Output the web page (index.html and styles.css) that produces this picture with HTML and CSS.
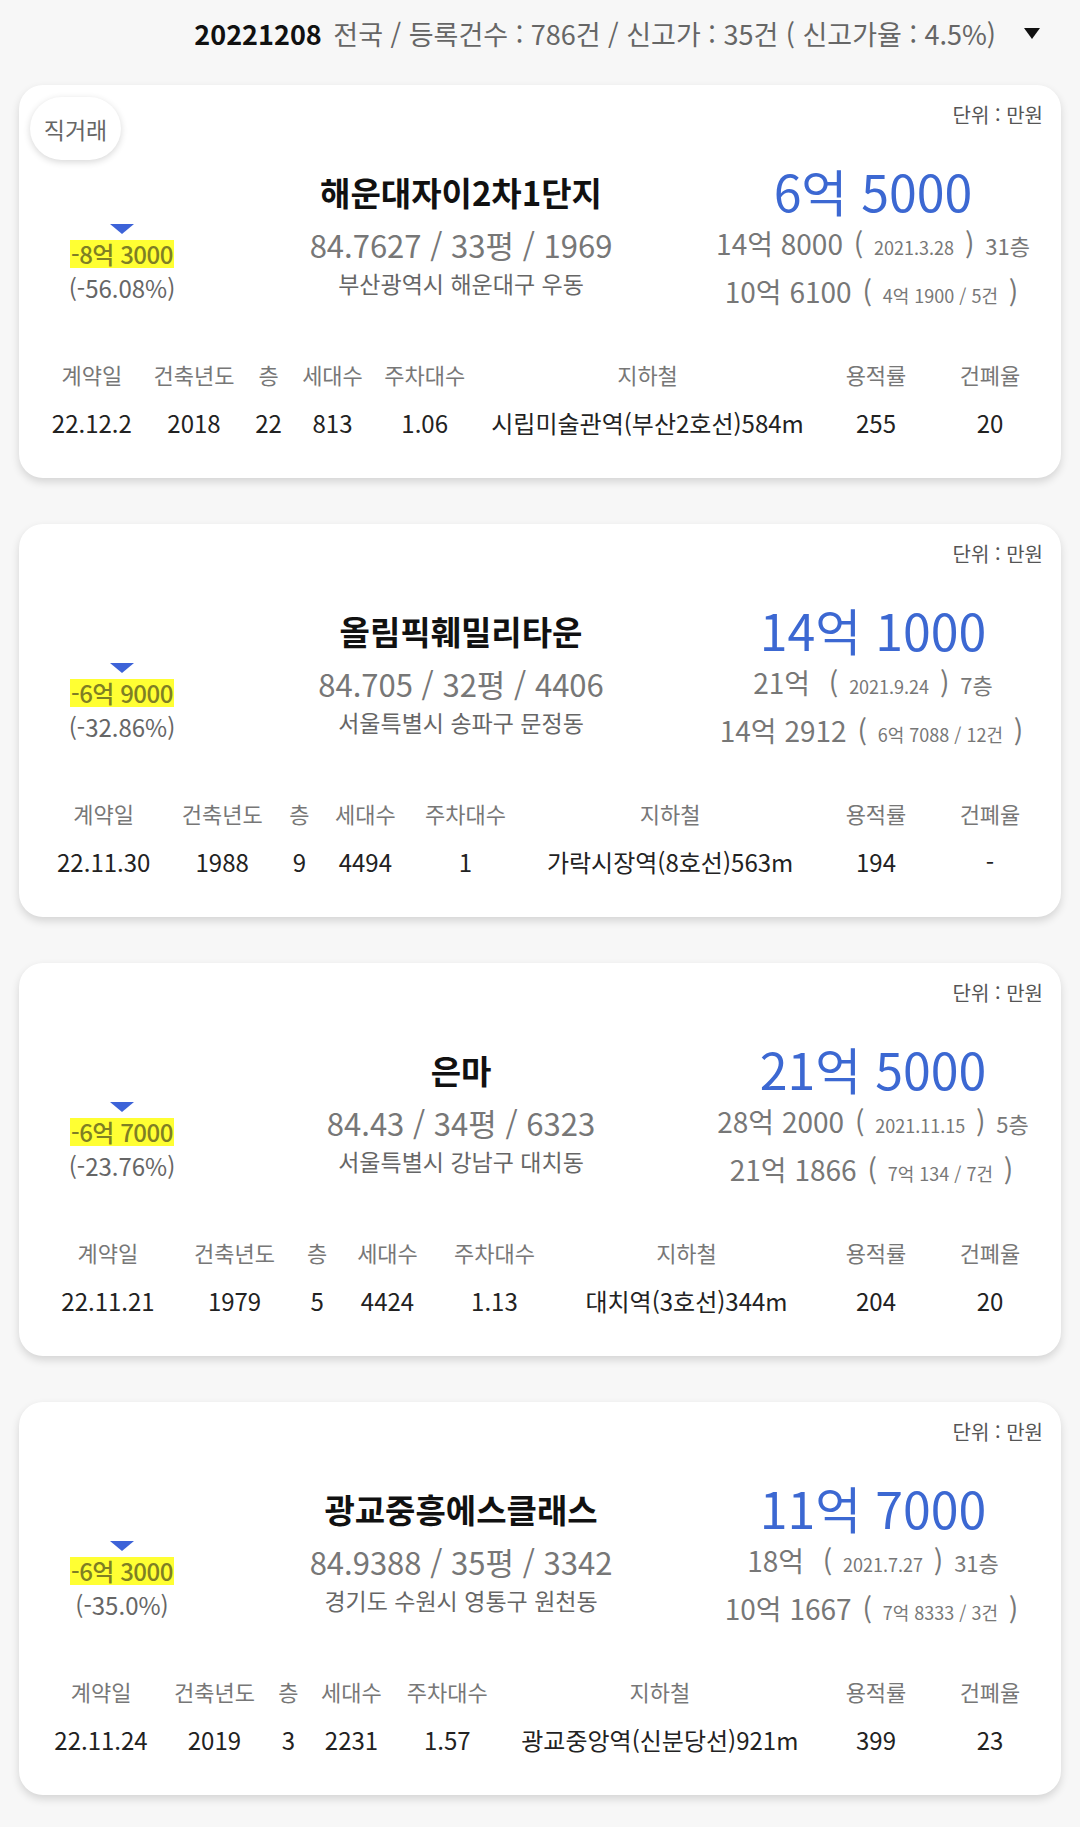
FILE: index.html
```html
<!DOCTYPE html>
<html lang="ko">
<head>
    <meta charset="UTF-8">
    <meta name="viewport" content="width=device-width, initial-scale=1.0">
    <title>신고가 목록</title>
    <link rel="stylesheet" href="styles.css">
</head>
<body>
    <div class="summary">
        <span class="summary-text"><b>20221208</b> 전국 / 등록건수 : 786건 / 신고가 : 35건 ( 신고가율 : 4.5%)</span>
        <span class="summary-arrow"></span>
    </div>

    <div class="list">
        <!-- card 1 -->
        <div class="card">
            <div class="chip">직거래</div>
            <div class="unit">단위 : 만원</div>
            <div class="top-row">
                <div class="diff">
                    <div class="down"></div>
                    <div class="diff-amount">-8억 3000</div>
                    <div class="diff-rate">(-56.08%)</div>
                </div>
                <div class="info">
                    <div class="apt-name">해운대자이2차1단지</div>
                    <div class="apt-spec">84.7627 / 33평 / 1969</div>
                    <div class="apt-addr">부산광역시 해운대구 우동</div>
                </div>
                <div class="price">
                    <div class="price-now">6억 5000</div>
                    <div class="price-line">14억 8000 <span class="paren">(</span> <small>2021.3.28</small> <span class="paren">)</span> <span class="floor">31층</span></div>
                    <div class="price-line">10억 6100 <span class="paren">(</span> <small>4억 1900 / 5건</small> <span class="paren">)</span></div>
                </div>
            </div>
            <table class="detail">
                <tr><th>계약일</th><th>건축년도</th><th>층</th><th>세대수</th><th>주차대수</th><th>지하철</th><th>용적률</th><th>건폐율</th></tr>
                <tr><td>22.12.2</td><td>2018</td><td>22</td><td>813</td><td>1.06</td><td>시립미술관역(부산2호선)584m</td><td>255</td><td>20</td></tr>
            </table>
        </div>

        <!-- card 2 -->
        <div class="card">
            <div class="unit">단위 : 만원</div>
            <div class="top-row">
                <div class="diff">
                    <div class="down"></div>
                    <div class="diff-amount">-6억 9000</div>
                    <div class="diff-rate">(-32.86%)</div>
                </div>
                <div class="info">
                    <div class="apt-name">올림픽훼밀리타운</div>
                    <div class="apt-spec">84.705 / 32평 / 4406</div>
                    <div class="apt-addr">서울특별시 송파구 문정동</div>
                </div>
                <div class="price">
                    <div class="price-now">14억 1000</div>
                    <div class="price-line">21억 &nbsp;<span class="paren">(</span> <small>2021.9.24</small> <span class="paren">)</span> <span class="floor">7층</span></div>
                    <div class="price-line">14억 2912 <span class="paren">(</span> <small>6억 7088 / 12건</small> <span class="paren">)</span></div>
                </div>
            </div>
            <table class="detail">
                <tr><th>계약일</th><th>건축년도</th><th>층</th><th>세대수</th><th>주차대수</th><th>지하철</th><th>용적률</th><th>건폐율</th></tr>
                <tr><td>22.11.30</td><td>1988</td><td>9</td><td>4494</td><td>1</td><td>가락시장역(8호선)563m</td><td>194</td><td>-</td></tr>
            </table>
        </div>

        <!-- card 3 -->
        <div class="card">
            <div class="unit">단위 : 만원</div>
            <div class="top-row">
                <div class="diff">
                    <div class="down"></div>
                    <div class="diff-amount">-6억 7000</div>
                    <div class="diff-rate">(-23.76%)</div>
                </div>
                <div class="info">
                    <div class="apt-name">은마</div>
                    <div class="apt-spec">84.43 / 34평 / 6323</div>
                    <div class="apt-addr">서울특별시 강남구 대치동</div>
                </div>
                <div class="price">
                    <div class="price-now">21억 5000</div>
                    <div class="price-line">28억 2000 <span class="paren">(</span> <small>2021.11.15</small> <span class="paren">)</span> <span class="floor">5층</span></div>
                    <div class="price-line">21억 1866 <span class="paren">(</span> <small>7억 134 / 7건</small> <span class="paren">)</span></div>
                </div>
            </div>
            <table class="detail">
                <tr><th>계약일</th><th>건축년도</th><th>층</th><th>세대수</th><th>주차대수</th><th>지하철</th><th>용적률</th><th>건폐율</th></tr>
                <tr><td>22.11.21</td><td>1979</td><td>5</td><td>4424</td><td>1.13</td><td>대치역(3호선)344m</td><td>204</td><td>20</td></tr>
            </table>
        </div>

        <!-- card 4 -->
        <div class="card">
            <div class="unit">단위 : 만원</div>
            <div class="top-row">
                <div class="diff">
                    <div class="down"></div>
                    <div class="diff-amount">-6억 3000</div>
                    <div class="diff-rate">(-35.0%)</div>
                </div>
                <div class="info">
                    <div class="apt-name">광교중흥에스클래스</div>
                    <div class="apt-spec">84.9388 / 35평 / 3342</div>
                    <div class="apt-addr">경기도 수원시 영통구 원천동</div>
                </div>
                <div class="price">
                    <div class="price-now">11억 7000</div>
                    <div class="price-line">18억 &nbsp;<span class="paren">(</span> <small>2021.7.27</small> <span class="paren">)</span> <span class="floor">31층</span></div>
                    <div class="price-line">10억 1667 <span class="paren">(</span> <small>7억 8333 / 3건</small> <span class="paren">)</span></div>
                </div>
            </div>
            <table class="detail">
                <tr><th>계약일</th><th>건축년도</th><th>층</th><th>세대수</th><th>주차대수</th><th>지하철</th><th>용적률</th><th>건폐율</th></tr>
                <tr><td>22.11.24</td><td>2019</td><td>3</td><td>2231</td><td>1.57</td><td>광교중앙역(신분당선)921m</td><td>399</td><td>23</td></tr>
            </table>
        </div>
    </div>
</body>
</html>
```

FILE: styles.css
```css
body {
    margin: 0;
    background-color: #f7f7f7;
    font-family: "Noto Sans CJK KR", "Noto Sans", sans-serif;
    color: #222;
}

.summary {
    height: 66px;
    display: flex;
    align-items: center;
    justify-content: flex-end;
    padding-right: 40px;
    gap: 28px;
}

.summary-text {
    font-size: 27px;
    color: #666;
}

.summary-text b {
    color: #111;
    margin-right: 4px;
}

.summary-arrow {
    width: 0;
    height: 0;
    border-left: 8px solid transparent;
    border-right: 8px solid transparent;
    border-top: 11px solid #111;
}

.list {
    padding: 19px 19px 0;
}

.card {
    position: relative;
    background-color: white;
    border-radius: 24px;
    box-shadow: 0 4px 8px rgba(0, 0, 0, 0.14);
    margin-bottom: 46px;
    padding-bottom: 35px;
}

.chip {
    position: absolute;
    top: 12px;
    left: 11px;
    width: 91px;
    height: 63px;
    border-radius: 32px;
    background-color: white;
    box-shadow: 0 2px 7px rgba(0, 0, 0, 0.16);
    display: flex;
    align-items: center;
    justify-content: center;
    font-size: 23px;
    color: #666;
}

.unit {
    padding: 18px 18px 0;
    line-height: 24px;
    text-align: right;
    font-size: 20px;
    color: #555;
}

.top-row {
    display: flex;
    align-items: flex-start;
    height: 186px;
    padding: 0 15px 0 3px;
}

/* left column: drop amount */
.diff {
    width: 200px;
    padding-top: 97px;
    display: flex;
    flex-direction: column;
    align-items: center;
}

.down {
    width: 0;
    height: 0;
    border-left: 12px solid transparent;
    border-right: 12px solid transparent;
    border-top: 10px solid #3d63d8;
    margin-bottom: 6px;
}

.diff-amount {
    background-color: #ffff33;
    color: #7f7f24;
    font-size: 24px;
    font-weight: 500;
    line-height: 28px;
    padding: 0 1px;
    letter-spacing: -0.5px;
}

.diff-rate {
    margin-top: 5px;
    font-size: 24px;
    line-height: 30px;
    color: #666;
}

/* middle column: apartment */
.info {
    width: 478px;
    padding-top: 43px;
    text-align: center;
}

.apt-name {
    font-size: 33px;
    font-weight: bold;
    line-height: 44px;
    color: #111;
}

.apt-spec {
    margin-top: 11px;
    font-size: 31px;
    line-height: 40px;
    color: #777;
}

.apt-addr {
    margin-top: 3px;
    font-size: 23px;
    line-height: 30px;
    color: #666;
}

/* right column: price */
.price {
    flex: 1;
    padding-top: 35px;
    text-align: center;
}

.price-now {
    font-size: 50px;
    line-height: 56px;
    color: #3c68d2;
}

.price-line {
    margin-top: 6px;
    font-size: 28px;
    line-height: 38px;
    color: #777;
}

.price-line small {
    font-size: 18px;
}

.price-line .paren {
    margin: 0 3px;
}

.price-line .floor {
    font-size: 22px;
}

/* bottom table */
.detail {
    width: calc(100% - 36px);
    margin: 41px 14px 0 22px;
    border-collapse: collapse;
    text-align: center;
    white-space: nowrap;
}

.detail th {
    font-size: 22px;
    font-weight: normal;
    color: #777;
    line-height: 40px;
    padding: 0 9px 9px;
}

.detail th:nth-child(7),
.detail th:nth-child(8) {
    width: 96px;
}

.detail td {
    font-size: 24px;
    color: #222;
    line-height: 40px;
    padding: 0 9px;
}
```
